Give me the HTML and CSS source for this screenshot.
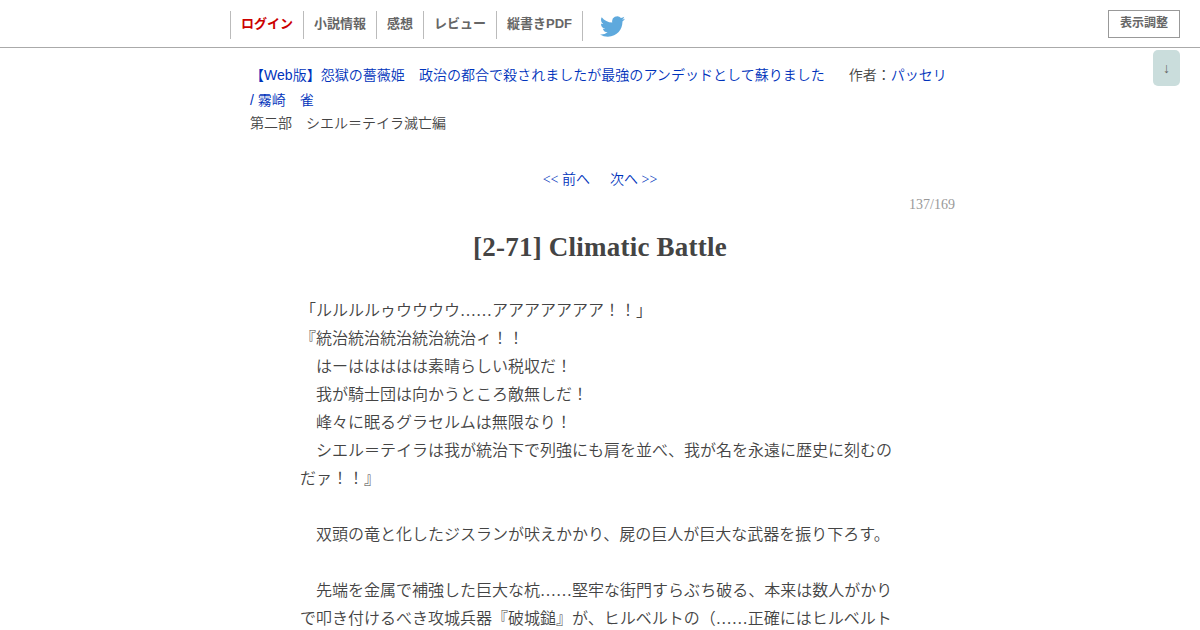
FILE: index.html
```
<!DOCTYPE html>
<html lang="ja">
<head>
    <meta charset="UTF-8">
    <title>[2-71] Climatic Battle</title>
    <link rel="stylesheet" href="styles.css">
</head>
<body>
    <div class="novel_header">
        <ul class="head_nav">
            <li><a class="login" href="#">ログイン</a></li>
            <li><a href="#">小説情報</a></li>
            <li><a href="#">感想</a></li>
            <li><a href="#">レビュー</a></li>
            <li><a href="#">縦書きPDF</a></li>
            <li class="twitter">
                <a href="#">
                    <svg width="25" height="21" viewBox="0 2 24 20" preserveAspectRatio="none"><path fill="#5ea9dd" d="M23.953 4.57a10 10 0 01-2.825.775 4.958 4.958 0 002.163-2.723c-.951.555-2.005.959-3.127 1.184a4.92 4.92 0 00-8.384 4.482C7.69 8.095 4.067 6.13 1.64 3.162a4.822 4.822 0 00-.666 2.475c0 1.71.87 3.213 2.188 4.096a4.904 4.904 0 01-2.228-.616v.06a4.923 4.923 0 003.946 4.827 4.996 4.996 0 01-2.212.085 4.936 4.936 0 004.604 3.417 9.867 9.867 0 01-6.102 2.105c-.39 0-.779-.023-1.17-.067a13.995 13.995 0 007.557 2.209c9.053 0 13.998-7.496 13.998-13.985 0-.21 0-.42-.015-.63A9.935 9.935 0 0024 4.59z"/></svg>
                </a>
            </li>
        </ul>
        <div class="menu_btn">表示調整</div>
    </div>
    <a class="go_bottom" href="#footer">↓</a>

    <div class="container">
        <div class="contents1">
            <a class="series" href="#">【Web版】怨獄の薔薇姫　政治の都合で殺されましたが最強のアンデッドとして蘇りました</a>
            作者：<a href="#">パッセリ<br>/ 霧崎　雀</a>
            <p class="chapter_title">第二部　シエル＝テイラ滅亡編</p>
        </div>

        <div class="novel_bn">
            <a href="#">&lt;&lt; 前へ</a>
            <a href="#">次へ &gt;&gt;</a>
        </div>
        <div class="novel_no">137/169</div>
        <h1 class="novel_subtitle">[2-71] Climatic Battle</h1>

        <div class="novel_view">
            <p>「ルルルルゥウウウウ……アアアアアアア！！」</p>
            <p>『統治統治統治統治統治ィ！！</p>
            <p>　はーははははは素晴らしい税収だ！</p>
            <p>　我が騎士団は向かうところ敵無しだ！</p>
            <p>　峰々に眠るグラセルムは無限なり！</p>
            <p>　シエル＝テイラは我が統治下で列強にも肩を並べ、我が名を永遠に歴史に刻むのだァ！！』</p>
            <p><br></p>
            <p>　双頭の竜と化したジスランが吠えかかり、屍の巨人が巨大な武器を振り下ろす。</p>
            <p><br></p>
            <p>　先端を金属で補強した巨大な杭……堅牢な街門すらぶち破る、本来は数人がかりで叩き付けるべき攻城兵器『破城鎚』が、ヒルベルトの（……正確にはヒルベルト</p>
        </div>
    </div>
</body>
</html>
```
FILE: styles.css
```
* {
    margin: 0;
    padding: 0;
    box-sizing: border-box;
}
html, body {
    height: 630px;
    overflow: hidden;
}
body {
    background: #fff;
    color: #444;
    font-family: "Liberation Serif", "Noto Sans CJK JP", serif;
    font-size: 14px;
    font-weight: 350;
}
a {
    color: #03b;
    text-decoration: none;
}

/* ヘッダー */
.novel_header {
    display: flex;
    justify-content: space-between;
    height: 48px;
    padding: 10px 20px 0 230px;
    border-bottom: 1px solid #aaa;
    font-family: "Liberation Sans", "Noto Sans CJK JP", sans-serif;
    font-weight: bold;
}
.head_nav {
    display: flex;
    align-items: flex-start;
    padding-top: 1px;
    list-style: none;
    font-size: 13px;
    line-height: 26px;
}
.head_nav li {
    height: 28px;
    padding: 0 10px;
    border-left: 1px solid #bbb;
}
.head_nav a {
    display: block;
    color: #666;
}
.head_nav a.login {
    color: #c00;
}
.head_nav li.twitter {
    height: 30px;
    padding: 5px 0 0 17px;
}
.twitter svg {
    display: block;
}
.menu_btn {
    width: 72px;
    height: 28px;
    border: 1px solid #999;
    color: #666;
    font-size: 12px;
    line-height: 25px;
    text-align: center;
}
.go_bottom {
    position: absolute;
    top: 50px;
    right: 20px;
    width: 27px;
    height: 36px;
    border-radius: 5px;
    background: #cadddc;
    color: #666;
    line-height: 37px;
    text-align: center;
}

/* 本文 */
.container {
    width: 730px;
    margin: 0 auto;
}
.contents1 {
    padding: 15px 0 0 15px;
    font-family: "Liberation Sans", "Noto Sans CJK JP", sans-serif;
    line-height: 25px;
}
.series {
    margin-right: 20px;
    letter-spacing: 0.03px;
}
.chapter_title {
    line-height: 21px;
}
.novel_bn {
    display: flex;
    justify-content: center;
    gap: 20px;
    margin-top: 34px;
    line-height: 24px;
}
.novel_no {
    padding: 3px 10px 0 0;
    color: #999;
    line-height: 20px;
    text-align: right;
}
.novel_subtitle {
    margin-top: 12px;
    font-size: 27px;
    letter-spacing: 0.22px;
    line-height: 40px;
    text-align: center;
}
.novel_view {
    width: 600px;
    margin: 30px auto 0;
    font-size: 16px;
    line-height: 28px;
}
```
